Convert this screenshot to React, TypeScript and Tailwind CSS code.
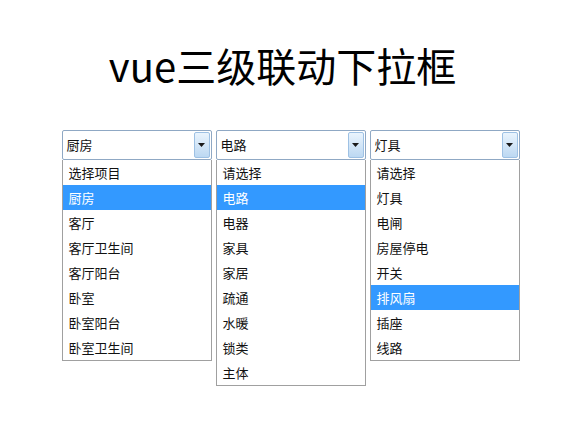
const font = { fontFamily: '"Noto Sans CJK SC", "Noto Sans", sans-serif' }

type Column = {
  value: string
  options: string[]
  active: number
}

const columns: Column[] = [
  {
    value: '厨房',
    options: ['选择项目', '厨房', '客厅', '客厅卫生间', '客厅阳台', '卧室', '卧室阳台', '卧室卫生间'],
    active: 1,
  },
  {
    value: '电路',
    options: ['请选择', '电路', '电器', '家具', '家居', '疏通', '水暖', '锁类', '主体'],
    active: 1,
  },
  {
    value: '灯具',
    options: ['请选择', '灯具', '电闸', '房屋停电', '开关', '排风扇', '插座', '线路'],
    active: 5,
  },
]

function Dropdown({ col }: { col: Column }) {
  return (
    <div className="w-[150px] flex flex-col">
      {/* closed select */}
      <div className="h-[30px] flex items-stretch border border-[#8fa8c4] bg-white rounded-[2px]">
        <span className="flex-1 flex items-center pl-[4px] text-[13px] text-[#111]">{col.value}</span>
        <span className="w-[16px] my-[1px] mr-[1px] flex items-center justify-center border border-[#9ec1e4] rounded-[2px] bg-gradient-to-b from-[#eaf4fd] to-[#bcd8f2]">
          <svg width="7" height="4" viewBox="0 0 7 4">
            <path d="M0 0h7L3.5 4z" fill="#1a1a1a" />
          </svg>
        </span>
      </div>
      {/* open list */}
      <ul className="border border-[#a0a0a0] border-t-0 bg-white">
        {col.options.map((opt, i) => (
          <li
            key={opt}
            className={
              'h-[25px] flex items-center pl-[6px] text-[13px] ' +
              (i === col.active ? 'bg-[#3399ff] text-white' : 'text-[#111]')
            }
          >
            {opt}
          </li>
        ))}
      </ul>
    </div>
  )
}

export default function App() {
  return (
    <div className="w-[588px] h-[447px] bg-white flex flex-col items-center" style={font}>
      <h1 className="mt-[45px] pr-[23px] text-[40px] leading-[40px] font-normal text-black">
        vue三级联动下拉框
      </h1>
      <div className="mt-[45px] pr-[7px] flex items-start gap-[4px]">
        {columns.map((c) => (
          <Dropdown key={c.value} col={c} />
        ))}
      </div>
    </div>
  )
}
